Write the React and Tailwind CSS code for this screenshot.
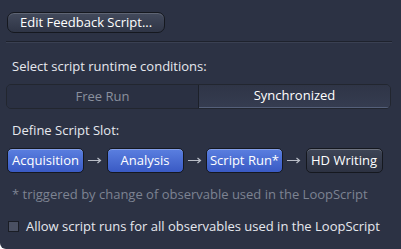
import React, { useState } from "react";

const Slot = ({ label, active }) => (
  <div
    className={
      "h-[25px] w-[77px] rounded-[5px] border border-[#15181f] flex items-center justify-center text-[13px] text-white shadow-[inset_0_1px_0_rgba(255,255,255,0.25)] " +
      (active
        ? "bg-gradient-to-b from-[#5b7fe0] to-[#3a5ac4]"
        : "bg-gradient-to-b from-[#3e4556] to-[#2d3242]")
    }
  >
    {label}
  </div>
);

const Arrow = () => (
  <span className="w-[22.5px] flex items-center justify-center">
    <svg width="14" height="7" viewBox="0 0 14 7">
      <path d="M0 3.5H12.5M9.5 1L12.5 3.5L9.5 6" stroke="#b9bdc7" strokeWidth="1.2" fill="none" />
    </svg>
  </span>
);

export default function App() {
  const [mode, setMode] = useState("sync");
  const [allow, setAllow] = useState(false);

  return (
    <div
      className="w-[401px] h-[249px] bg-[#2c3244] rounded-bl-[6px] overflow-hidden text-[#e6e8ee] px-[6px] pt-[12px]"
      style={{ fontFamily: '"Open Sans", "Noto Sans", sans-serif' }}
    >
      <button className="block ml-[1px] h-[21px] px-[12px] rounded-[7px] border border-[#15181f] bg-gradient-to-b from-[#434a5c] to-[#2f3546] text-[13px] text-white leading-none shadow-[inset_0_1px_0_rgba(255,255,255,0.15)]">
        Edit Feedback Script...
      </button>

      <div className="mt-[8px] h-[2px] bg-[#1e222d] border-b border-[#3a4052] mr-[3px]" />

      <div className="mt-[15px] ml-[6px] text-[13px] leading-[16px]">
        Select script runtime conditions:
      </div>

      <div className="mt-[10px] mr-[4px] h-[25px] flex rounded-[5px] border border-[#22262f] overflow-hidden">
        <button
          onClick={() => setMode("free")}
          className={
            "flex-1 text-[13px] " +
            (mode === "free"
              ? "bg-[#343b4f] text-white"
              : "bg-[#2a3042] text-[#8a909e]")
          }
        >
          Free Run
        </button>
        <div className="w-[1px] bg-[#1c2029]" />
        <button
          onClick={() => setMode("sync")}
          className={
            "flex-1 text-[13px] " +
            (mode === "sync"
              ? "bg-gradient-to-b from-[#2f3547] to-[#353c50] text-white border-b border-[#55607a]"
              : "bg-[#2a3042] text-[#8a909e]")
          }
        >
          Synchronized
        </button>
      </div>

      <div className="mt-[13px] ml-[6px] text-[13px] leading-[16px]">
        Define Script Slot:
      </div>

      <div className="mt-[10px] ml-[1px] flex items-center">
        <Slot label="Acquisition" active />
        <Arrow />
        <Slot label="Analysis" active />
        <Arrow />
        <Slot label="Script Run*" active />
        <Arrow />
        <Slot label="HD Writing" />
      </div>

      <div className="mt-[13px] ml-[6px] text-[13px] leading-[16px] text-[#7d8392]">
        * triggered by change of observable used in the LoopScript
      </div>

      <label className="mt-[16px] ml-[2px] flex items-center gap-[7px] text-[13px] leading-[16px]">
        <input
          type="checkbox"
          checked={allow}
          onChange={(e) => setAllow(e.target.checked)}
          className="appearance-none w-[11px] h-[11px] border border-[#1a1d25] bg-[#4a5062]"
        />
        Allow script runs for all observables used in the LoopScript
      </label>
    </div>
  );
}
